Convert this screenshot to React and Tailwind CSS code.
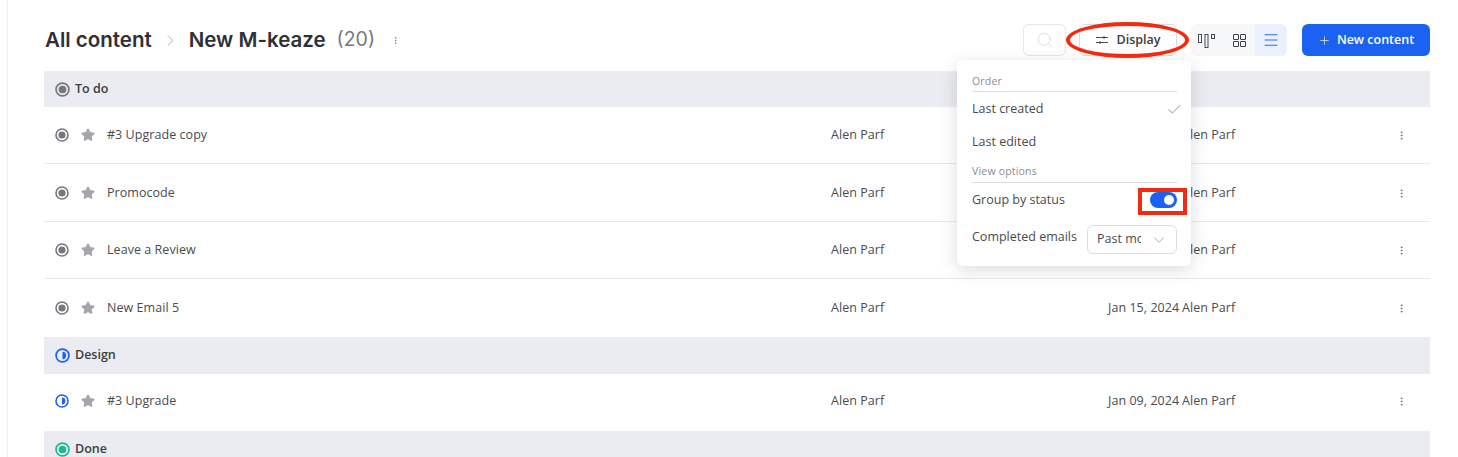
import React from 'react';
import { Check, ChevronDown, ChevronRight, EllipsisVertical, Plus, Search, Star, Menu } from 'lucide-react';

const StatusIcon = ({ type, size = 14 }) => {
    if (type === 'design') {
        return (
            <svg width={size} height={size} viewBox="0 0 14 14" className="shrink-0">
                <circle cx="7" cy="7" r="6" fill="none" stroke="#1c62f2" strokeWidth="1.6" />
                <path d="M7 3.6a3.4 3.4 0 0 1 0 6.8z" fill="#1c62f2" />
            </svg>
        );
    }
    const color = type === 'done' ? '#1fb894' : '#77787f';
    return (
        <svg width={size} height={size} viewBox="0 0 14 14" className="shrink-0">
            <circle cx="7" cy="7" r="6" fill="none" stroke={color} strokeWidth="1.6" />
            <circle cx="7" cy="7" r="3.6" fill={color} />
        </svg>
    );
};

const GroupHeader = ({ type, label, className = 'h-9' }) => (
    <div className={`flex items-center gap-[5px] bg-[#ebecf1] pl-[11px] text-[12.5px] font-semibold text-[#3c3d42] ${className}`}>
        <StatusIcon type={type} size={15} />
        <span>{label}</span>
    </div>
);

const Row = ({ type, title, date, border = true, className = 'h-[57px]' }) => (
    <div className={`flex items-center pl-[11px] text-[12.5px] tracking-[0.05px] text-[#4a4b50] ${border ? 'border-b border-[#e8e9ee]' : ''} ${className}`}>
        <StatusIcon type={type} />
        <Star className="ml-[12px] h-[14px] w-[14px] shrink-0 fill-[#a3a5ac] text-[#a3a5ac]" />
        <span className="ml-[12px] w-[724px] shrink-0">{title}</span>
        <span className="w-[277px] shrink-0">Alen Parf</span>
        <span className="w-[74px] shrink-0">{date}</span>
        <span className="w-[214px] shrink-0">Alen Parf</span>
        <EllipsisVertical className="h-[11px] w-[11px] text-[#6b6c72]" />
    </div>
);

const DisplayMenu = () => (
    <div className="absolute left-[957px] top-[60px] h-[206px] w-[234px] rounded-md bg-white pl-[15px] pr-[14px] pt-[14px] text-[12.5px] text-[#4a4b50] shadow-[0_4px_18px_rgba(30,35,60,0.16)]">
        <div className="border-b border-[#dcdde3] pb-[2px] text-[10.5px] leading-[15px] tracking-[0.2px] text-[#8a8b92]">Order</div>
        <div className="mt-px flex h-[33px] items-center justify-between">
            <span>Last created</span>
            <Check className="-mr-[6px] h-[17px] w-[17px] text-[#77787f]" strokeWidth={1.1} />
        </div>
        <div className="flex h-[33px] items-center">Last edited</div>
        <div className="mt-[5px] border-b border-[#dcdde3] pb-[3px] text-[10.5px] leading-[15px] tracking-[0.2px] text-[#8a8b92]">View options</div>
        <div className="flex h-[34px] items-center justify-between">
            <span>Group by status</span>
            <div className="flex h-[16px] w-[27px] items-center justify-end rounded-full bg-[#1c62f2] pr-[3px]">
                <div className="h-[10px] w-[10px] rounded-full bg-white" />
            </div>
        </div>
        <div className="mt-[8px] flex items-center justify-between">
            <span className="-mt-[4px]">Completed emails</span>
            <div className="flex h-[29px] w-[90px] items-center rounded-md border border-[#dcdde3] pl-[9px]">
                <span className="w-[44px] overflow-hidden whitespace-nowrap">Past month</span>
                <ChevronDown className="ml-[9px] h-[18px] w-[18px] text-[#9a9ba2]" strokeWidth={1.1} />
            </div>
        </div>
    </div>
);

const App = () => {
    return (
        <div className="relative h-[457px] w-[1458px] overflow-hidden bg-white font-['Open_Sans',sans-serif]">
            <div className="ml-[7px] h-full border-l border-[#eeeff2] pl-[36px] pr-[28px]">
                <div className="flex h-[71px] items-start justify-between pt-[24px]">
                    <div className="flex h-8 items-center pl-px">
                        <h1 className="font-['Inter',sans-serif] text-[20.5px] font-semibold text-[#2f3035]">All content</h1>
                        <ChevronRight className="ml-[9px] h-[19px] w-[19px] text-[#9a9ba2]" strokeWidth={1} />
                        <h1 className="ml-[9px] font-['Inter',sans-serif] text-[20.5px] font-semibold text-[#2f3035]">New M-keaze</h1>
                        <span className="ml-[11px] font-['Inter',sans-serif] text-[19.5px] text-[#77787f]">(20)</span>
                        <EllipsisVertical className="ml-[16px] h-[9px] w-[9px] text-[#77787f]" />
                    </div>
                    <div className="flex h-8 items-center">
                        <div className="flex h-8 w-[43px] items-center justify-center rounded-md border border-[#e6e7ec]">
                            <Search className="h-[18px] w-[18px] text-[#dcdde3]" strokeWidth={1.25} />
                        </div>
                        <div className="ml-[13px] flex h-8 w-[98px] items-center justify-center gap-[9px] rounded-md border border-[#d5dcea] text-[12.5px] font-semibold text-[#3c3d42]">
                            <svg width="12" height="10" viewBox="0 0 12 10" fill="none" stroke="#4a4b50" strokeWidth="1">
                                <path d="M0 2.5h12M0 7.5h12M8 1v3M4 6v3" />
                            </svg>
                            <span>Display</span>
                        </div>
                        <div className="ml-[14px] flex h-8 w-[96px] items-center rounded-md bg-[#f6f7f9]">
                            <div className="flex h-8 w-8 items-center justify-center">
                                <svg width="18" height="16" viewBox="0 0 18 16" fill="none" stroke="#4a4b50" strokeWidth="1">
                                    <rect x="0.5" y="2.5" width="3" height="8" />
                                    <rect x="7" y="2.5" width="3" height="13" />
                                    <rect x="13.5" y="2.5" width="3" height="4" />
                                </svg>
                            </div>
                            <div className="flex h-8 w-8 items-center justify-center">
                                <svg width="13" height="13" viewBox="0 0 13 13" fill="none" stroke="#3c3d42" strokeWidth="1">
                                    <rect x="0.5" y="0.5" width="5" height="5" rx="0.5" />
                                    <rect x="7.5" y="0.5" width="5" height="5" rx="0.5" />
                                    <rect x="0.5" y="7.5" width="5" height="5" rx="0.5" />
                                    <rect x="7.5" y="7.5" width="5" height="5" rx="0.5" />
                                </svg>
                            </div>
                            <div className="flex h-8 w-8 items-center justify-center rounded-r-md bg-[#ebf1fc]">
                                <Menu className="h-[18px] w-[18px] text-[#1c62f2]" strokeWidth={1.25} />
                            </div>
                        </div>
                        <div className="ml-[15px] flex h-8 w-[128px] items-center justify-center gap-[6px] rounded-md bg-[#1c62f2] text-[12.5px] font-semibold text-white">
                            <Plus className="h-[13px] w-[13px]" strokeWidth={1.25} />
                            <span>New content</span>
                        </div>
                    </div>
                </div>

                <GroupHeader type="todo" label="To do" />
                <Row type="todo" title="#3 Upgrade copy" date="Jan 15, 2024" />
                <Row type="todo" title="Promocode" date="Jan 15, 2024" className="h-[58px] pt-px" />
                <Row type="todo" title="Leave a Review" date="Jan 15, 2024" />
                <Row type="todo" title="New Email 5" date="Jan 15, 2024" border={false} className="h-[58px]" />
                <GroupHeader type="design" label="Design" className="h-[37px]" />
                <Row type="design" title="#3 Upgrade" date="Jan 09, 2024" border={false} className="h-[57px] pb-[3px]" />
                <GroupHeader type="done" label="Done" />
            </div>

            <DisplayMenu />

            {/* annotations drawn over the screenshot */}
            <div className="absolute left-[1066px] top-[22px] h-[36px] w-[123px] rounded-[50%] border-[4.5px] border-[#f22a0f]" />
            <div className="absolute left-[1138px] top-[188px] h-[27px] w-[49px] border-[4px] border-[#f22a0f]" />
        </div>
    );
};

export default App;
